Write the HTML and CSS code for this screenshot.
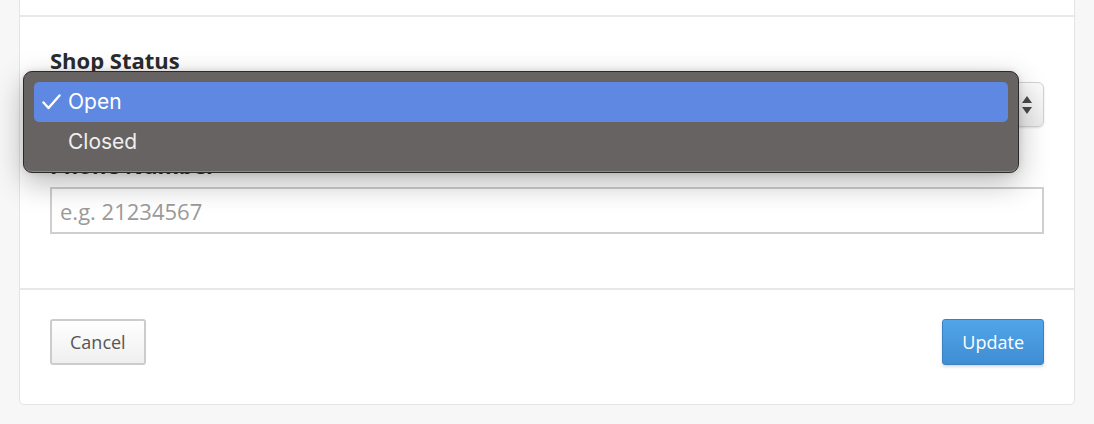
FILE: index.html
```html
<!DOCTYPE html>
<html lang="en">
<head>
    <meta charset="UTF-8">
    <meta name="viewport" content="width=device-width, initial-scale=1.0">
    <title>Edit Shop</title>
    <link rel="stylesheet" href="styles.css">
</head>
<body>
    <div class="panel">
        <div class="panel-top"></div>

        <form class="panel-body">
            <div class="form-group status-group">
                <label class="field-label">Shop Status</label>
                <div class="select-box">
                    <svg class="select-arrows" width="12" height="20" viewBox="0 0 12 20">
                        <path d="M1 8 L6 1 L11 8 Z" fill="#4a4a4a"/>
                        <path d="M1 12 L6 19 L11 12 Z" fill="#4a4a4a"/>
                    </svg>
                </div>

                <!-- native popup menu, open -->
                <ul class="select-menu">
                    <li class="menu-item selected">
                        <span class="check">
                            <svg width="19" height="16" viewBox="0 0 19 16">
                                <path d="M1.5 8.5 L6.5 14 L17.5 1.5" fill="none" stroke="#fff" stroke-width="2.4" stroke-linecap="round" stroke-linejoin="round"/>
                            </svg>
                        </span>Open
                    </li>
                    <li class="menu-item"><span class="check"></span>Closed</li>
                </ul>
            </div>

            <div class="form-group">
                <label class="field-label" for="phone">Phone Number</label>
                <input type="text" id="phone" class="text-input" placeholder="e.g. 21234567">
            </div>
        </form>

        <div class="panel-footer">
            <button type="button" class="btn btn-default">Cancel</button>
            <button type="button" class="btn btn-primary">Update</button>
        </div>
    </div>
</body>
</html>
```

FILE: styles.css
```css
html, body {
    margin: 0;
    padding: 0;
}
body {
    background-color: #f7f7f7;
    font-family: "Open Sans", Arial, sans-serif;
    color: #333;
}
.panel {
    width: 1054px;
    margin: -1px 0 0 19px;
    background-color: #fff;
    border: 1px solid #e4e4e4;
    border-radius: 0 0 5px 5px;
}
.panel-top {
    height: 15px;
    border-bottom: 2px solid #e8e8e8;
}
.panel-body {
    margin: 0;
    padding: 28px 30px 30px 30px;
    border-bottom: 2px solid #e8e8e8;
}
.form-group {
    margin-bottom: 24px;
}
.status-group {
    position: relative;
    margin-bottom: 23px;
}
.field-label {
    display: block;
    font-size: 22px;
    font-weight: bold;
    line-height: 30px;
    margin-bottom: 7px;
    color: #2b2b2b;
}
.select-box {
    height: 43px;
    border: 1px solid #d2d2d2;
    border-radius: 6px;
    background: linear-gradient(#fbfbfb, #ececec);
    box-shadow: 0 1px 2px rgba(0, 0, 0, 0.12);
    display: flex;
    justify-content: flex-end;
    align-items: center;
    padding-right: 10px;
}
.select-arrows {
    display: block;
}
.select-menu {
    position: absolute;
    left: -27px;
    top: 26px;
    width: 974px;
    margin: 0;
    padding: 10px;
    list-style: none;
    background-color: #676363;
    border: 1px solid #2b2929;
    border-radius: 9px;
    box-shadow: inset 0 -1px 0 #8d8989, 0 10px 30px rgba(0, 0, 0, 0.28), 0 0 6px rgba(0, 0, 0, 0.12);
    font-family: Inter, "Noto Sans", sans-serif;
    font-size: 21px;
    color: #f0eeee;
}
.menu-item {
    height: 40px;
    line-height: 40px;
    display: flex;
    align-items: center;
    border-radius: 5px;
}
.menu-item.selected {
    background-color: #5f88e2;
    color: #fff;
}
.check {
    width: 34px;
    padding-left: 8px;
    box-sizing: border-box;
    display: flex;
    align-items: center;
}
.text-input {
    display: block;
    width: 100%;
    height: 47px;
    box-sizing: border-box;
    padding: 6px 8px;
    border: 2px solid #cfcfcf;
    font-family: "Open Sans", Arial, sans-serif;
    font-size: 22px;
    color: #555;
    background: #fff;
}
.text-input::placeholder {
    color: #9a9a9a;
}
.panel-footer {
    display: flex;
    justify-content: space-between;
    padding: 29px 30px 39px 30px;
}
.btn {
    height: 46px;
    padding: 0 19px;
    border-radius: 3px;
    font-family: "Open Sans", Arial, sans-serif;
    font-size: 18px;
    cursor: pointer;
}
.btn-default {
    background: linear-gradient(#ffffff, #efefef);
    border: 2px solid #cccccc;
    color: #555;
    padding: 0 18px;
}
.btn-primary {
    background: linear-gradient(#52a5ea, #3f8dd2);
    border: 1px solid #3a80c2;
    color: #fff;
    padding: 0 19px;
    box-shadow: 0 2px 3px rgba(0, 0, 0, 0.15);
}
```
